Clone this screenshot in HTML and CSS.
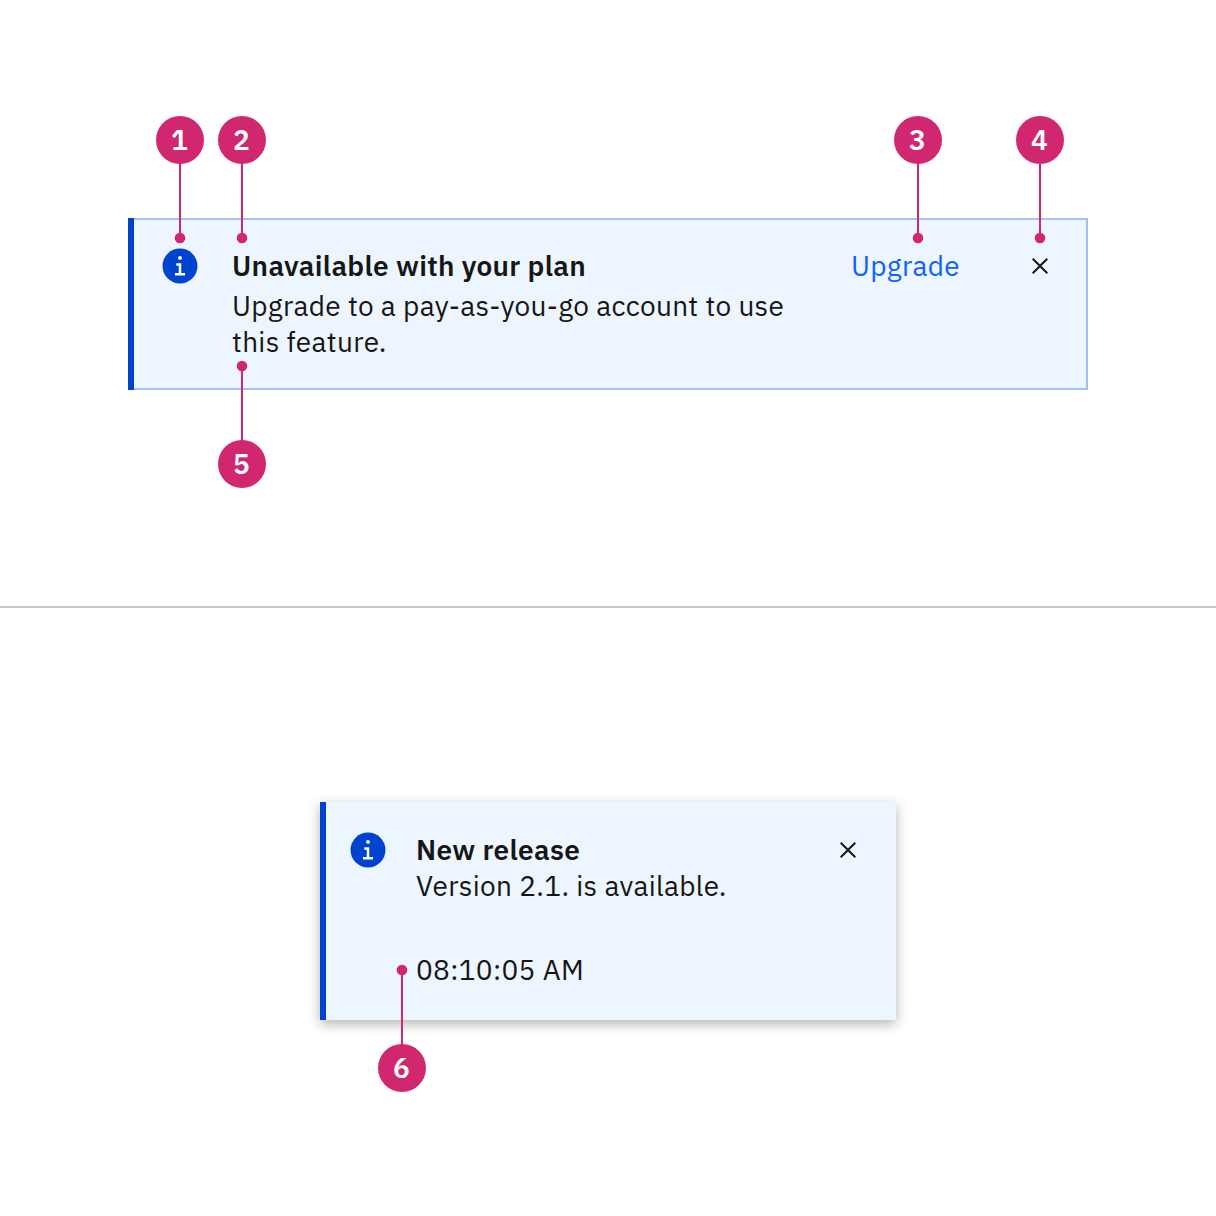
FILE: index.html
```html
<!DOCTYPE html>
<html lang="en">
<head>
<meta charset="utf-8">
<title>Notification anatomy</title>
<link rel="stylesheet" href="styles.css">
</head>
<body>
<svg width="0" height="0" class="symbols">
  <symbol id="info" viewBox="0 0 40 40">
    <circle cx="20" cy="20" r="17.5" fill="#0043ce"/>
    <circle cx="20" cy="11.9" r="1.95" fill="#fff"/>
    <path d="M16.25 17.3h5v9.7H25v2.4H15V27h3.75v-7.3h-2.5z" fill="#fff"/>
  </symbol>
  <symbol id="close" viewBox="0 0 32 32">
    <path fill="#161616" d="M24 9.4 22.6 8 16 14.6 9.4 8 8 9.4l6.6 6.6L8 22.6 9.4 24l6.6-6.6 6.6 6.6 1.4-1.4-6.6-6.6z"/>
  </symbol>
  <symbol id="leader-down" viewBox="0 0 12 82">
    <path d="M5 0h2v76H5z" fill="#d12771"/>
    <circle cx="6" cy="76" r="5.33" fill="#d12771"/>
  </symbol>
  <symbol id="leader-up" viewBox="0 0 12 82">
    <path d="M5 6h2v76H5z" fill="#d12771"/>
    <circle cx="6" cy="6" r="5.33" fill="#d12771"/>
  </symbol>
</svg>
<main class="page">
  <section class="panel panel-inline">
    <article class="notice inline">
      <svg class="info"><use href="#info"/></svg>
      <div class="copy">
        <h2 class="title">Unavailable with your plan</h2>
        <p class="body">Upgrade to a pay-as-you-go account to use<br>this feature.</p>
      </div>
      <a class="action">Upgrade</a>
      <svg class="close"><use href="#close"/></svg>
      <div class="callout down c1"><b class="badge">1</b><svg class="leader"><use href="#leader-down"/></svg></div>
      <div class="callout down c2"><b class="badge">2</b><svg class="leader"><use href="#leader-down"/></svg></div>
      <div class="callout down c3"><b class="badge">3</b><svg class="leader"><use href="#leader-down"/></svg></div>
      <div class="callout down c4"><b class="badge">4</b><svg class="leader"><use href="#leader-down"/></svg></div>
      <div class="callout up c5"><svg class="leader"><use href="#leader-up"/></svg><b class="badge">5</b></div>
    </article>
  </section>
  <section class="panel panel-toast">
    <article class="notice toast">
      <svg class="info"><use href="#info"/></svg>
      <div class="copy">
        <h2 class="title">New release</h2>
        <p class="body">Version 2.1. is available.</p>
        <p class="body time">08:10:05 AM</p>
      </div>
      <svg class="close"><use href="#close"/></svg>
      <div class="callout up c6"><svg class="leader"><use href="#leader-up"/></svg><b class="badge">6</b></div>
    </article>
  </section>
</main>
</body>
</html>
```
FILE: styles.css
```css
* { box-sizing: border-box; }
body {
  margin: 0;
  background: #fff;
  color: #161616;
  font-family: "IBM Plex Sans", "Open Sans", sans-serif;
  font-size: 28px;
  line-height: 36px;
  letter-spacing: .32px;
}
.symbols { position: absolute; }
.page { height: 1216px; display: flex; flex-direction: column; overflow: hidden; }
.panel { display: flex; flex-direction: column; align-items: center; }
.panel-inline { height: 608px; padding-top: 218px; border-bottom: 2px solid #c6c6c6; }
.panel-toast { height: 608px; padding-top: 194px; }
.notice { position: relative; display: flex; background: #edf5ff; border-left: 6px solid #0043ce; }
.info { width: 40px; height: 40px; flex: none; }
.close { width: 32px; height: 32px; flex: none; }
.title, .body { margin: 0; font-size: inherit; white-space: nowrap; }
.title { font-weight: 600; }
.copy { flex: 1; }

.inline { width: 960px; height: 172px; padding: 28px 32px 0 26px; }
.inline::before {
  content: "";
  position: absolute;
  inset: 0;
  border: 2px solid #a6c0f0;
  border-left: 0;
}
.inline .copy { padding: 2px 0 0 32px; }
.inline .title { margin-bottom: 4px; }
.action { width: 173px; padding-top: 2px; color: #0f62fe; }
.inline .close { margin-top: 4px; }

.toast { width: 576px; height: 218px; padding: 28px 32px 0 22px; box-shadow: 0 4px 12px rgba(0, 0, 0, .3); }
.toast .copy { padding: 2px 0 0 28px; }
.toast .close { margin-top: 4px; }
.time { margin-top: 48px; }

/* Numbered callouts: badge, leader line and end dot */
.callout { position: absolute; width: 48px; display: flex; flex-direction: column; align-items: center; }
.leader { width: 12px; height: 82px; flex: none; }
.badge {
  width: 48px;
  height: 48px;
  padding-right: 1px;
  border-radius: 50%;
  background: #d12771;
  color: #fff;
  font-weight: 600;
  line-height: 48px;
  text-align: center;
}
.down { top: -102px; }
.down .leader { margin-top: -2px; }
.up .leader { margin-bottom: -2px; }
.c1 { left: 22px; }
.c2 { left: 84px; }
.c3 { left: 760px; }
.c4 { left: 882px; }
.c5 { left: 84px; top: 142px; }
.c6 { left: 52px; top: 162px; }
```
